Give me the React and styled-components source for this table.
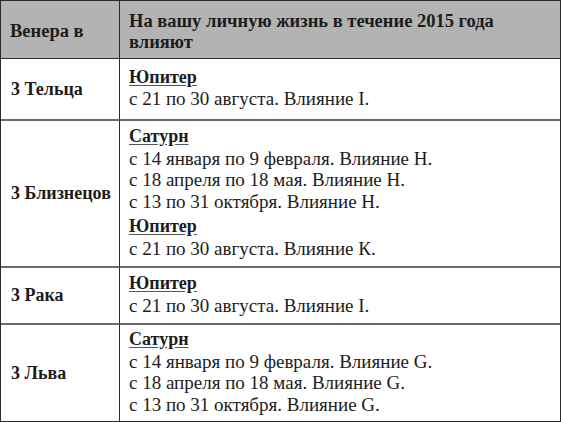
import React from 'react';
import styled, { createGlobalStyle } from 'styled-components';

const GlobalStyle = createGlobalStyle`
  html, body {
    margin: 0;
    padding: 0;
    background: #ffffff;
  }
`;

const Table = styled.div`
  width: 561px;
  height: 422px;
  box-sizing: border-box;
  border: 1.5px solid #2a2a2a;
  display: grid;
  grid-template-columns: 118px 1fr;
  grid-template-rows: 58px 60px 147px 57px 1fr;
  font-family: "Liberation Serif", serif;
  font-size: 19px;
  color: #1c1c1c;
`;

const HeadCell = styled.div`
  background: #b3b3b3;
  border-bottom: 1.5px solid #2a2a2a;
  border-left: ${(p) => (p.$first ? 'none' : '1.5px solid #2a2a2a')};
  font-weight: bold;
  font-size: 18.5px;
  line-height: 21px;
  display: flex;
  align-items: center;
  padding: 4px 9px 0;
`;

const SignCell = styled.div`
  display: flex;
  align-items: center;
  padding: 0 0 0 10px;
  font-weight: bold;
  font-size: 18px;
  white-space: nowrap;
  border-top: ${(p) => (p.$top ? '2px solid #6a6a6a' : 'none')};
`;

const InfoCell = styled.div`
  display: flex;
  flex-direction: column;
  justify-content: center;
  gap: 4px;
  padding: 0 9px 2px;
  border-left: 1.5px solid #2a2a2a;
  border-top: ${(p) => (p.$top ? '2px solid #6a6a6a' : 'none')};
`;

const Group = styled.div`
  display: flex;
  flex-direction: column;
  line-height: 21.5px;
`;

const Planet = styled.span`
  font-weight: bold;
  font-size: 18px;
  text-decoration: underline;
  text-decoration-color: #555;
  text-underline-offset: 2px;
`;

const rows = [
  {
    sign: '3 Тельца',
    groups: [{ planet: 'Юпитер', lines: ['с 21 по 30 августа. Влияние I.'] }],
  },
  {
    sign: '3 Близнецов',
    groups: [
      {
        planet: 'Сатурн',
        lines: [
          'с 14 января по 9 февраля. Влияние Н.',
          'с 18 апреля по 18 мая. Влияние Н.',
          'с 13 по 31 октября. Влияние Н.',
        ],
      },
      { planet: 'Юпитер', lines: ['с 21 по 30 августа. Влияние К.'] },
    ],
  },
  {
    sign: '3 Рака',
    groups: [{ planet: 'Юпитер', lines: ['с 21 по 30 августа. Влияние I.'] }],
  },
  {
    sign: '3 Льва',
    groups: [
      {
        planet: 'Сатурн',
        lines: [
          'с 14 января по 9 февраля. Влияние G.',
          'с 18 апреля по 18 мая. Влияние G.',
          'с 13 по 31 октября. Влияние G.',
        ],
      },
    ],
  },
];

export default function App() {
  return (
    <>
      <GlobalStyle />
      <Table>
        <HeadCell $first>Венера в</HeadCell>
        <HeadCell>
          На вашу личную жизнь в течение 2015 года
          <br />
          влияют
        </HeadCell>
        {rows.map((row, i) => (
          <React.Fragment key={row.sign}>
            <SignCell $top={i > 0}>{row.sign}</SignCell>
            <InfoCell $top={i > 0}>
              {row.groups.map((g, j) => (
                <Group key={j}>
                  <Planet>{g.planet}</Planet>
                  {g.lines.map((l) => (
                    <span key={l}>{l}</span>
                  ))}
                </Group>
              ))}
            </InfoCell>
          </React.Fragment>
        ))}
      </Table>
    </>
  );
}
